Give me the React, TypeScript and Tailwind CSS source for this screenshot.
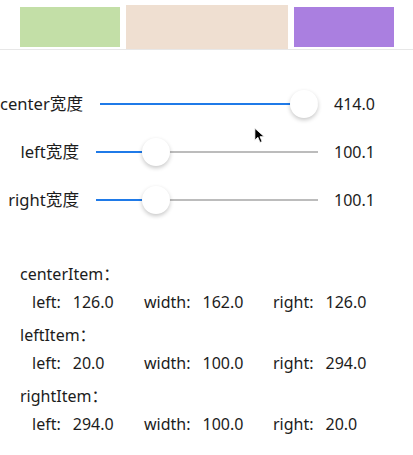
const font = { fontFamily: '"Noto Sans", "Noto Sans CJK SC", sans-serif' };

function Slider({ width, thumb }: { width: number; thumb: number }) {
  // thumb = distance of thumb centre from the track start
  return (
    <div className="relative h-[28px]" style={{ width }}>
      <div className="absolute left-0 top-[13px] h-[2px] bg-[#1f7ae8]" style={{ width: thumb }} />
      <div className="absolute right-0 top-[13px] h-[2px] bg-[#bcbcbc]" style={{ left: thumb }} />
      <div
        className="absolute top-0 w-[28px] h-[28px] rounded-full bg-white shadow-[0_2px_4px_rgba(0,0,0,0.22)]"
        style={{ left: thumb - 14 }}
      />
    </div>
  );
}

function SliderRow({ label, labelW, trackW, thumb, value }: { label: string; labelW: number; trackW: number; thumb: number; value: string }) {
  return (
    <div className="h-[48px] flex items-center">
      <div className="whitespace-nowrap shrink-0 flex justify-end text-[16.6px]" style={{ width: labelW }}>
        <span>{label}</span>
      </div>
      <div className="ml-[17px] shrink-0">
        <Slider width={trackW} thumb={thumb} />
      </div>
      <div className="ml-[16px]">{value}</div>
    </div>
  );
}

function ItemRow({ left, width, right }: { left: string; width: string; right: string }) {
  return (
    <div className="mt-[6px] pl-[12px] grid grid-cols-[112px_129px_auto] leading-[22px]">
      <div className="flex"><span>left:</span><span className="ml-[12px]">{left}</span></div>
      <div className="flex"><span>width:</span><span className="ml-[12px]">{width}</span></div>
      <div className="flex"><span>right:</span><span className="ml-[12px]">{right}</span></div>
    </div>
  );
}

export default function App() {
  return (
    <div className="relative w-[413px] h-[455px] overflow-hidden bg-white text-[16px] text-[#1c1c1c]" style={font}>
      <div className="h-[50px] border-b border-[#e7e7e7] flex items-start pt-[5px] pl-[20px] gap-[6px]">
        <div className="mt-[2px] w-[100px] h-[40px] bg-[#c3dfa7]" />
        <div className="w-[162px] h-[44px] bg-[#efdfd1]" />
        <div className="mt-[2px] w-[100px] h-[40px] bg-[#aa7fe0]" />
      </div>

      <div className="mt-[30px]">
        <SliderRow label="center宽度" labelW={83} trackW={218} thumb={204} value="414.0" />
        <SliderRow label="left宽度" labelW={79} trackW={222} thumb={60} value="100.1" />
        <SliderRow label="right宽度" labelW={79} trackW={222} thumb={60} value="100.1" />
      </div>

      <div className="mt-[39px] pl-[20px]">
        <div className="leading-[22px]">centerItem：</div>
        <ItemRow left="126.0" width="162.0" right="126.0" />
        <div className="mt-[11px] leading-[22px]">leftItem：</div>
        <ItemRow left="20.0" width="100.0" right="294.0" />
        <div className="mt-[11px] leading-[22px]">rightItem：</div>
        <ItemRow left="294.0" width="100.0" right="20.0" />
      </div>

      <svg className="absolute left-[254px] top-[127px]" width="12" height="18" viewBox="0 0 14 20">
        <path d="M1 1 L1 15 L4.5 11.5 L7 17.5 L9.5 16.5 L7 10.8 L12 10.8 Z" fill="#000" stroke="#fff" strokeWidth="1" strokeLinejoin="round" />
      </svg>
    </div>
  );
}
